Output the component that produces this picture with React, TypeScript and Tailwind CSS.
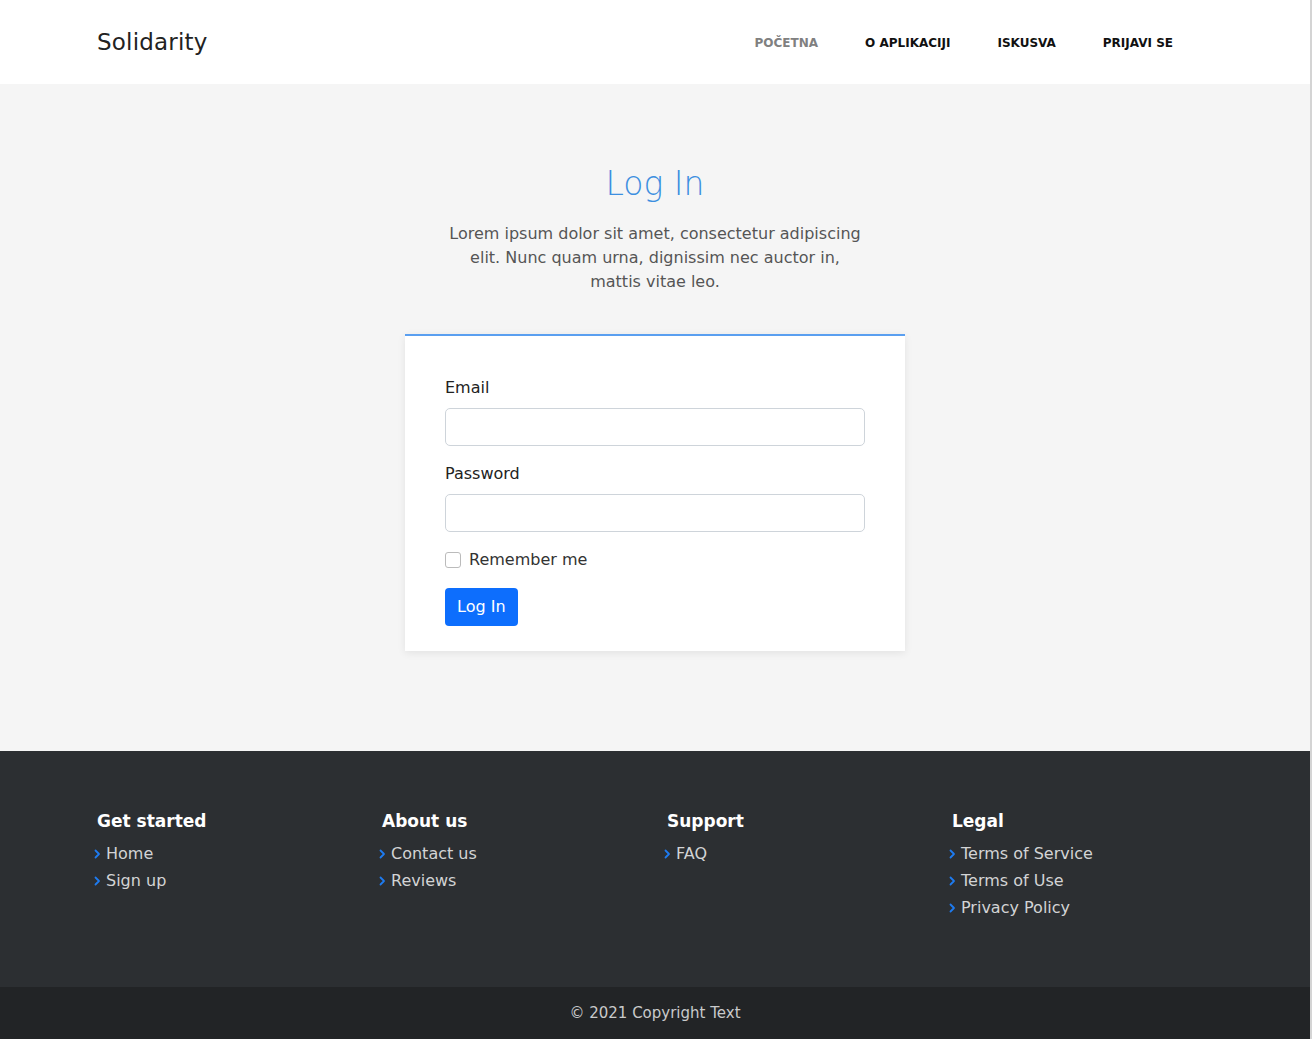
import React from "react";

const font = { fontFamily: '"DejaVu Sans", "Noto Sans", sans-serif' };

function Chevron() {
  return (
    <svg width="7" height="10" viewBox="0 0 7 10" className="mr-[5px] shrink-0">
      <path d="M1.5 1.5 L5 5 L1.5 8.5" fill="none" stroke="#1e7bf0" strokeWidth="1.8" strokeLinecap="round" strokeLinejoin="round" />
    </svg>
  );
}

function FooterCol({ title, links }: { title: string; links: string[] }) {
  return (
    <div className="flex flex-col px-3">
      <h4 className="text-[17px] font-bold text-white leading-[24px] mb-[7px]">{title}</h4>
      <ul className="flex flex-col">
        {links.map((l) => (
          <li key={l} className="flex items-center -ml-[3px] h-[27px] text-[16px] text-[#d3d4d5]">
            <Chevron />
            <span>{l}</span>
          </li>
        ))}
      </ul>
    </div>
  );
}

export default function App() {
  return (
    <div style={font} className="w-full min-h-screen flex">
      <div className="flex-1 min-w-0 bg-[#f5f5f5] flex flex-col">
        <header className="bg-white h-[84px]">
          <div className="w-[1140px] mx-auto px-3 h-full flex items-center justify-between">
            <span className="text-[23px] text-[#222] tracking-[0.2px]">Solidarity</span>
            <nav className="flex items-center gap-[47px] mr-[40px] mt-[2px] text-[12px] font-semibold uppercase">
              <a className="text-[#808080]">Početna</a>
              <a className="text-[#111]">O aplikaciji</a>
              <a className="text-[#111]">Iskusva</a>
              <a className="text-[#111]">Prijavi se</a>
            </nav>
          </div>
        </header>

        <main className="flex flex-col items-center pt-[80px] pb-[100px]">
          <h1 className="text-[33px] leading-[40px] font-light text-[#3d8fe0]">Log In</h1>
          <p className="mt-[18px] text-center text-[16px] leading-[24px] text-[#555]">
            Lorem ipsum dolor sit amet, consectetur adipiscing
            <br />
            elit. Nunc quam urna, dignissim nec auctor in,
            <br />
            mattis vitae leo.
          </p>
          <div className="mt-[40px] w-[500px] bg-white border-t-2 border-[#5a9ff0] shadow-[0_2px_8px_rgba(0,0,0,0.08)] px-[40px] pt-[40px] pb-[25px]">
            <label className="block text-[16px] leading-[24px] text-[#222]">Email</label>
            <input className="mt-[8px] block w-full h-[38px] border border-[#ced4da] rounded-[5px] bg-white" />
            <label className="block mt-[16px] text-[16px] leading-[24px] text-[#222]">Password</label>
            <input type="password" className="mt-[8px] block w-full h-[38px] border border-[#ced4da] rounded-[5px] bg-white" />
            <div className="mt-[18px] flex items-center">
              <span className="w-[16px] h-[16px] border border-[#bbb] rounded-[3px] bg-white" />
              <span className="ml-[8px] text-[16px] leading-[20px] text-[#333]">Remember me</span>
            </div>
            <button className="mt-[18px] h-[38px] px-[12px] bg-[#0d6efd] text-white text-[16px] rounded-[4px]">Log In</button>
          </div>
        </main>

        <footer className="bg-[#2c2f32] pt-[58px] h-[236px]">
          <div className="w-[1140px] mx-auto grid grid-cols-4">
            <FooterCol title="Get started" links={["Home", "Sign up"]} />
            <FooterCol title="About us" links={["Contact us", "Reviews"]} />
            <FooterCol title="Support" links={["FAQ"]} />
            <FooterCol title="Legal" links={["Terms of Service", "Terms of Use", "Privacy Policy"]} />
          </div>
        </footer>
        <div className="bg-[#222426] h-[52px] flex items-center justify-center text-[15px] text-[#c9cacb]">
          © 2021 Copyright Text
        </div>
      </div>
      <div className="w-[2px] shrink-0 bg-[#d4d4d4]" />
    </div>
  );
}
